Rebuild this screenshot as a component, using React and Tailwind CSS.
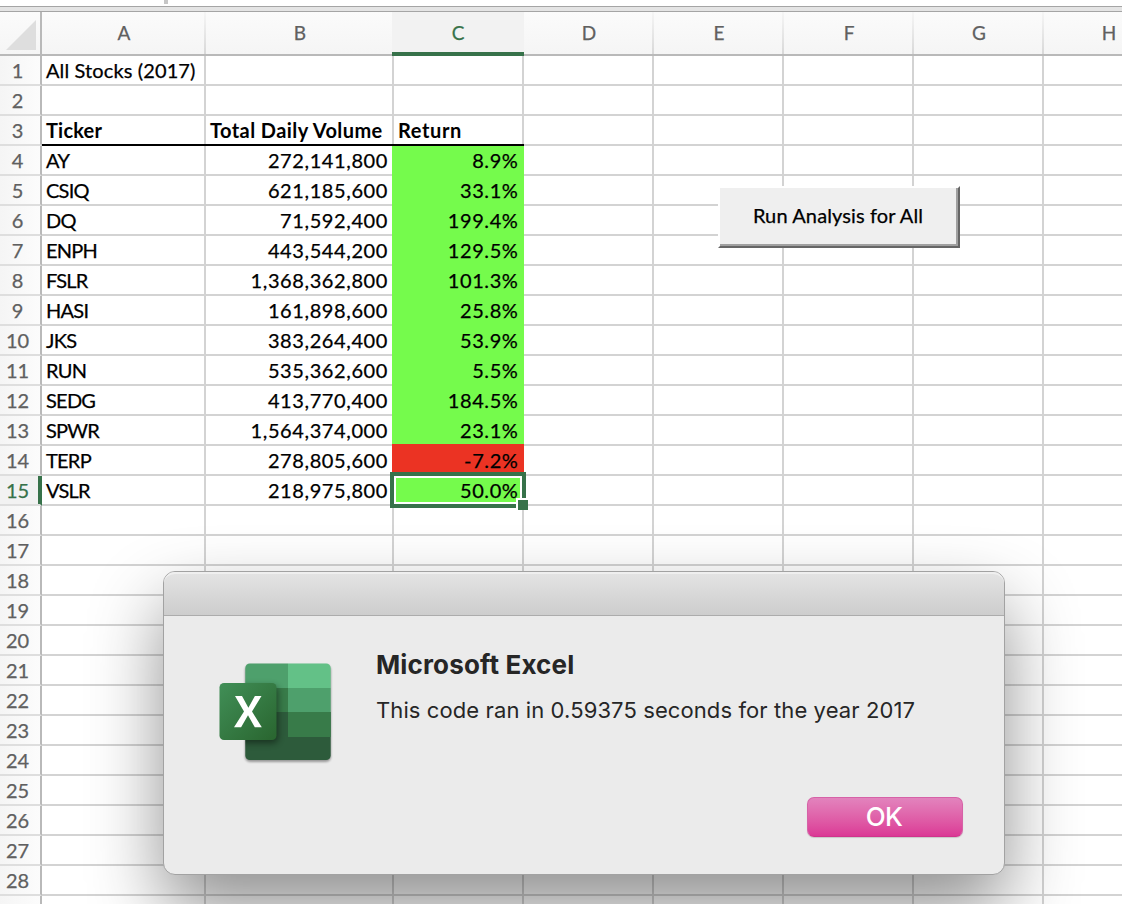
import React from "react";

const columns = [
  { name: "A", width: "w-[164px]" },
  { name: "B", width: "w-[188px]" },
  { name: "C", width: "w-[130px]" },
  { name: "D", width: "w-[130px]" },
  { name: "E", width: "w-[130px]" },
  { name: "F", width: "w-[130px]" },
  { name: "G", width: "w-[130px]" },
  { name: "H", width: "w-[130px]" },
];

const rows = [
  ["All Stocks (2017)"],
  [],
  ["Ticker", "Total Daily Volume", "Return"],
  ["AY", "272,141,800", "8.9%"],
  ["CSIQ", "621,185,600", "33.1%"],
  ["DQ", "71,592,400", "199.4%"],
  ["ENPH", "443,544,200", "129.5%"],
  ["FSLR", "1,368,362,800", "101.3%"],
  ["HASI", "161,898,600", "25.8%"],
  ["JKS", "383,264,400", "53.9%"],
  ["RUN", "535,362,600", "5.5%"],
  ["SEDG", "413,770,400", "184.5%"],
  ["SPWR", "1,564,374,000", "23.1%"],
  ["TERP", "278,805,600", "-7.2%"],
  ["VSLR", "218,975,800", "50.0%"],
  ...Array.from({ length: 14 }, () => []),
];

const headingSpacing = ["tracking-[0.2px]", "tracking-[0.42px]", "tracking-[0.6px]"];

function Cell({ row, col, value }) {
  const heading = row === 3 && col < 3;
  const data = row > 3 && row < 16;
  const filled = data && col === 2;

  let text = "justify-start pl-1 tracking-[0.12px] [-webkit-text-stroke:0.25px_black]";
  if (heading) text = `justify-start pl-1 font-bold ${headingSpacing[col]}`;
  else if (data && col > 0) text = "justify-end pr-1 tracking-[0.6px] [-webkit-text-stroke:0.25px_black]";
  else if (data) text = "justify-start pl-1 tracking-[-0.75px] [-webkit-text-stroke:0.25px_black]";

  let box = `border-r-2 border-b-2 border-[#d3d3d3] ${columns[col].width}`;
  if (heading)
    box = `border-b-2 border-black bg-[linear-gradient(#d3d3d3,#d3d3d3)] bg-[length:2px_100%] bg-right bg-no-repeat ${columns[col].width}`;
  else if (filled)
    box = `relative -ml-0.5 w-[132px] border-b-2 ${row === 14 ? "bg-[#eb3323]" : "bg-[#75fb4c]"} ${row === 13 || row === 14 ? "border-[#eb3323]" : "border-[#75fb4c]"}`;

  return (
    <div
      className={`flex h-[30px] shrink-0 items-center text-[20px] leading-7 whitespace-nowrap text-black ${box} ${text}`}
    >
      <span className={filled ? "pr-[1.5px]" : ""}>{value}</span>
    </div>
  );
}

function SheetHeader() {
  return (
    <div className="flex h-11 shrink-0 border-b-2 border-[#b9b9b9] bg-gradient-to-b from-[#fbfbfb] to-[#f5f5f5]">
      <div className="flex w-[42px] shrink-0 items-start border-r-2 border-[#b9b9b9] pt-2 pl-1.5">
        <svg width="30" height="30" viewBox="0 0 30 30">
          <path d="M30 0V30H0Z" fill="#dedede" />
        </svg>
      </div>
      {columns.map((c) =>
        c.name === "C" ? (
          <div
            key={c.name}
            className="relative -ml-0.5 flex h-11 w-[132px] shrink-0 items-center justify-center border-b-4 border-[#37724a] bg-[#f2f2f2] pt-0.5 text-[19px] text-[#37724a] [-webkit-text-stroke:0.25px_#37724a]"
          >
            {c.name}
          </div>
        ) : (
          <div
            key={c.name}
            className={`flex h-[42px] shrink-0 items-center justify-center bg-[linear-gradient(#f6f6f6,#d8d8d8)] bg-[length:2px_100%] bg-right bg-no-repeat text-[19px] text-[#606060] [-webkit-text-stroke:0.25px_#606060] ${c.width}`}
          >
            {c.name}
          </div>
        ),
      )}
    </div>
  );
}

function ExcelIcon() {
  return (
    <svg width="122" height="110" viewBox="0 0 122 110" className="overflow-visible">
      <defs>
        <clipPath id="book">
          <rect x="30.3" y="6.4" width="85.4" height="96.6" rx="4.5" />
        </clipPath>
        <linearGradient id="tile" x1="0" y1="0" x2="1" y2="1">
          <stop offset="0" stopColor="#418f57" />
          <stop offset="1" stopColor="#29652f" />
        </linearGradient>
        <filter id="soft" x="-30%" y="-30%" width="160%" height="160%">
          <feGaussianBlur stdDeviation="3.5" />
        </filter>
        <filter id="thin" x="-10%" y="-10%" width="120%" height="120%">
          <feGaussianBlur stdDeviation="1" />
        </filter>
      </defs>
      <rect x="30" y="8" width="86" height="97" rx="5" fill="#000" opacity=".35" filter="url(#thin)" />
      <g clipPath="url(#book)">
        <path d="M30 6H73V31H30Z" fill="#4ea06c" />
        <path d="M73 6H116V31H73Z" fill="#63c187" />
        <path d="M30 31H73V55H30Z" fill="#387b49" />
        <path d="M73 31H116V55H73Z" fill="#4ea06c" />
        <path d="M30 55H116V103H30Z" fill="#2d5b3b" />
        <path d="M73 55H116V80H73Z" fill="#387b49" />
        <rect x="5" y="29" width="58" height="57" rx="5" fill="#000" opacity=".45" filter="url(#soft)" />
      </g>
      <rect x="4.5" y="26" width="57" height="57" rx="4.5" fill="url(#tile)" />
      <path
        d="M20 39H27L33.4 50.8L39.9 39H46.5L37 54.5L46.8 70.2H39.8L33 58.3L26.1 70.2H19L29 54.5Z"
        fill="#fff"
      />
    </svg>
  );
}

function Dialog() {
  return (
    <div className="absolute top-[571px] left-[163px] flex h-[304px] w-[842px] flex-col overflow-visible rounded-[12px] border border-[#a2a2a2] bg-[#ebebeb] font-[Inter,sans-serif] text-[#262626] shadow-[0_34px_72px_rgba(0,0,0,0.44)]">
      <div className="h-11 shrink-0 rounded-t-[11px] border-t-2 border-b border-t-[#efefef] border-b-[#acacac] bg-gradient-to-b from-[#e3e3e3] to-[#cdcdcd]" />
      <div className="flex h-[136px] shrink-0 pt-[41px] pl-[51px]">
        <ExcelIcon />
        <div className="ml-[39px] whitespace-nowrap">
          <h1 className="-mt-2 text-[26px] leading-8 font-bold tracking-[0.15px]">Microsoft Excel</h1>
          <p className="mt-[15px] text-[22px] leading-7 tracking-[0.1px]">
            This code ran in 0.59375 seconds for the year 2017
          </p>
        </div>
      </div>
      <div className="flex justify-end pt-[45px] pr-[41px]">
        <button className="h-10 w-[156px] rounded-[7px] border border-[#d662a7] border-b-[#cf348b] bg-gradient-to-b from-[#e283bd] to-[#db3896] pr-0.5 text-[26px] leading-9 font-medium tracking-[-0.6px] text-white shadow-[0_1px_1px_rgba(0,0,0,0.15)]">
          OK
        </button>
      </div>
    </div>
  );
}

export default function App() {
  return (
    <div className="relative h-[904px] w-[1122px] overflow-hidden bg-white font-[Lato,Carlito,sans-serif]">
      <div className="flex h-1.5 pl-[164px]">
        <div className="h-1 w-1 bg-[#c6c6c6]" />
      </div>
      <div className="h-1.5 border-t border-b border-[#a5a5a5] bg-[#e4e4e4]" />
      <SheetHeader />
      {rows.map((values, i) => {
        const row = i + 1;
        const active = row === 15;
        return (
          <div key={row} className="flex h-[30px]">
            <div
              className={`flex h-[30px] w-[42px] shrink-0 items-center justify-center border-r-2 border-b-2 border-b-[#dedede] pr-[5px] text-[20px] leading-7 ${active ? "border-r-[#37724a] bg-[#f2f2f2] text-[#37724a] shadow-[inset_-2px_0_#37724a] [-webkit-text-stroke:0.25px_#37724a]" : "border-r-[#b9b9b9] bg-gradient-to-r from-[#f5f5f5] to-[#fcfcfc] text-[#606060] [-webkit-text-stroke:0.25px_#606060]"}`}
            >
              {row}
            </div>
            {columns.map((c, col) => (
              <Cell key={c.name} row={row} col={col} value={values[col]} />
            ))}
          </div>
        );
      })}
      <div className="absolute top-[472px] left-[390px] h-9 w-[136px] border-4 border-[#37724a]">
        <div className="h-full w-full border-2 border-white" />
      </div>
      <div className="absolute top-[498px] left-[516px] h-3 w-3 border-t-2 border-l-2 border-white bg-[#37724a]" />
      <button className="absolute top-[186px] left-[718px] h-[62px] w-[242px] border-2 border-t-white border-r-[#666] border-b-[#666] border-l-white bg-[#efefef] pr-0.5 pb-1 text-[20px] tracking-[0.12px] text-black shadow-[inset_-2px_-2px_#a0a0a0] [-webkit-text-stroke:0.25px_black]">
        Run Analysis for All
      </button>
      <Dialog />
    </div>
  );
}
